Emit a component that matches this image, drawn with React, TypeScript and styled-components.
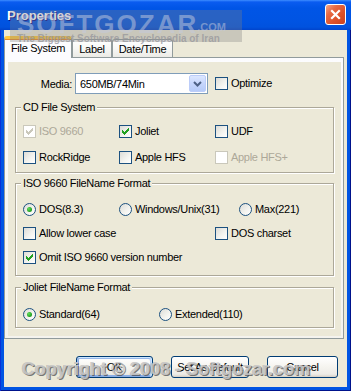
import React from 'react';
import styled, { createGlobalStyle } from 'styled-components';

const GlobalStyle = createGlobalStyle`
  html, body {
    margin: 0;
    padding: 0;
    background: #fff;
  }
  body {
    width: 351px;
    height: 391px;
    overflow: hidden;
  }
`;

const Window = styled.div`
  position: relative;
  width: 351px;
  height: 391px;
  display: flex;
  flex-direction: column;
  background: #0054e3;
  box-shadow: inset 1px 0 #0831d9, inset -1px -1px #00138c;
  font-family: "Liberation Sans", Arial, sans-serif;
  font-size: 11px;
  letter-spacing: -0.3px;
  color: #000;
  overflow: hidden;
`;

const TitleBar = styled.div`
  flex: none;
  height: 30px;
  box-sizing: border-box;
  display: flex;
  align-items: center;
  justify-content: space-between;
  padding: 0 5px 0 7px;
  background: linear-gradient(180deg, #3d8dff 0, #0a5cf0 2px, #0055e6 8px, #0054e3 20px, #0052de 27px, #0044cc 30px);
`;

const Title = styled.div`
  color: #fff;
  font-size: 13px;
  font-weight: bold;
  letter-spacing: 0;
  text-shadow: 1px 1px #0f1089;
`;

const CloseButton = styled.div`
  box-sizing: border-box;
  width: 21px;
  height: 21px;
  margin-top: -1px;
  border: 1px solid #fff;
  border-radius: 3px;
  background: linear-gradient(135deg, #f6a88a 0%, #e76a44 30%, #dc5028 65%, #c9421d 100%);
  display: flex;
  align-items: center;
  justify-content: center;
`;

const Body = styled.div`
  flex: 1;
  margin: 0 4px 4px 4px;
  background: #ece9d8;
  display: flex;
  flex-direction: column;
  padding: 6px 3px 9px 0;
`;

const TabStrip = styled.div`
  display: flex;
  align-items: flex-end;
  height: 22px;
  margin-bottom: -1px;
  position: relative;
  z-index: 1;
`;

const Tab = styled.div<{ $active?: boolean; $w: number }>`
  box-sizing: border-box;
  width: ${p => p.$w}px;
  height: ${p => (p.$active ? 22 : 18)}px;
  margin-bottom: ${p => (p.$active ? 0 : 1)}px;
  border: 1px solid #919b9c;
  border-bottom: none;
  border-top: ${p => (p.$active ? '3px solid #ffc73c' : '1px solid #919b9c')};
  border-radius: 3px 3px 0 0;
  background: ${p => (p.$active ? '#fcfcfe' : 'linear-gradient(180deg, #fff 0%, #f7f7f5 50%, #ecebe6 100%)')};
  display: flex;
  align-items: center;
  justify-content: center;
  padding-bottom: ${p => (p.$active ? 1 : 0)}px;
  box-shadow: ${p => (p.$active ? 'inset 0 1px #e68b2c' : 'none')};
`;

const Panel = styled.div`
  box-sizing: border-box;
  height: 282px;
  border: 1px solid #919b9c;
  background: linear-gradient(180deg, #fcfcfe, #f4f3ee);
  padding: 4px 2px 2px 3px;
  display: flex;
`;

const Page = styled.div`
  flex: 1;
  background: #ece9d8;
  padding: 11px 7px 0 7px;
  display: flex;
  flex-direction: column;
`;

const MediaRow = styled.div`
  display: flex;
  align-items: center;
  height: 21px;
`;

const MediaLabel = styled.span`
  width: 60px;
  box-sizing: border-box;
  padding-right: 3px;
  text-align: right;
`;

const Combo = styled.div`
  box-sizing: border-box;
  width: 133px;
  height: 21px;
  border: 1px solid #7f9db9;
  background: #fff;
  display: flex;
  align-items: center;
  padding: 1px;
  margin-right: 7px;
`;

const ComboText = styled.span`
  flex: 1;
  padding-left: 3px;
`;

const ComboButton = styled.span`
  box-sizing: border-box;
  width: 17px;
  height: 17px;
  border: 1px solid #bccdf9;
  border-radius: 2px;
  background: linear-gradient(180deg, #dce7ff 0%, #c6d6fc 50%, #b6cbf8 100%);
  display: flex;
  align-items: center;
  justify-content: center;
`;

const Group = styled.div<{ $mt: number; $pb: number }>`
  margin-top: ${p => p.$mt}px;
  border: 1px solid #aca899;
  box-shadow: 1px 1px 0 #fff, inset 1px 1px 0 #fff;
  padding: 0 7px ${p => p.$pb}px 7px;
  display: flex;
  flex-direction: column;
`;

const GroupTitle = styled.span`
  align-self: flex-start;
  margin: -7px 0 0 -2px;
  padding: 0 2px;
  line-height: 13px;
  background: #ece9d8;
`;

const Rows = styled.div<{ $mt: number; $gap: number }>`
  margin-top: ${p => p.$mt}px;
  display: flex;
  flex-direction: column;
  gap: ${p => p.$gap}px;
`;

const Row = styled.div`
  display: flex;
  height: 13px;
`;

const Cell = styled.label<{ $w?: number; $disabled?: boolean }>`
  display: flex;
  align-items: center;
  gap: 3px;
  width: ${p => (p.$w ? `${p.$w}px` : 'auto')};
  line-height: 13px;
  white-space: nowrap;
  color: ${p => (p.$disabled ? '#aca899' : '#000')};
`;

const Box = styled.span<{ $disabled?: boolean }>`
  box-sizing: border-box;
  flex: none;
  width: 13px;
  height: 13px;
  border: 1px solid ${p => (p.$disabled ? '#cac8bb' : '#1c5180')};
  background: ${p => (p.$disabled ? '#fff' : 'linear-gradient(135deg, #dcdcd7 0%, #f4f4f0 60%, #fff 100%)')};
  display: flex;
`;

const RadioRing = styled.span`
  box-sizing: border-box;
  flex: none;
  width: 13px;
  height: 13px;
  border-radius: 50%;
  border: 1px solid #1c5180;
  background: linear-gradient(135deg, #dcdcd7 0%, #f4f4f0 60%, #fff 100%);
  display: flex;
  align-items: center;
  justify-content: center;
`;

const RadioDot = styled.span`
  width: 5px;
  height: 5px;
  border-radius: 50%;
  background: radial-gradient(circle at 35% 35%, #62de5e 0%, #21a121 65%, #1a8a1a 100%);
`;

const ButtonRow = styled.div`
  margin-top: 17px;
  display: flex;
  justify-content: flex-end;
  gap: 18px;
  padding-right: 6px;
`;

const Button = styled.div<{ $w: number; $default?: boolean }>`
  box-sizing: border-box;
  width: ${p => p.$w}px;
  height: 22px;
  border: 1px solid #003c74;
  border-radius: 3px;
  background: linear-gradient(180deg, #fff 0%, #f5f4ef 50%, #ecebe6 86%, #d6d0c5 100%);
  display: flex;
  align-items: center;
  justify-content: center;
  box-shadow: ${p =>
    p.$default
      ? 'inset -1px 1px #cee7ff, inset 1px 2px #98b8ea, inset -2px 2px #bcd4f6, inset 1px -1px #89ade4, inset 2px -2px #89ade4'
      : 'none'};
`;

const TopMark = styled.div`
  position: absolute;
  left: 10px;
  top: 10px;
  width: 232px;
  height: 32px;
  box-sizing: border-box;
  padding-left: 7px;
  background: rgba(128, 128, 128, 0.32);
  pointer-events: none;
  display: flex;
  flex-direction: column;
  align-items: flex-start;
  z-index: 5;
`;

const MarkBrand = styled.div`
  margin-top: 3px;
  font-size: 26px;
  line-height: 22px;
  font-weight: bold;
  letter-spacing: 2px;
  color: rgba(196, 202, 222, 0.5);
`;

const MarkCom = styled.span`
  font-size: 11px;
  letter-spacing: 0;
  margin-left: -1px;
  vertical-align: 2px;
`;

const MarkSub = styled.div`
  margin-top: -4px;
  font-size: 10px;
  line-height: 10px;
  font-weight: bold;
  letter-spacing: 0;
  color: rgba(150, 150, 155, 0.75);
`;

const CopyMark = styled.div`
  position: absolute;
  left: 22px;
  top: 359px;
  font-size: 18px;
  font-weight: bold;
  letter-spacing: 0;
  white-space: nowrap;
  color: rgba(205, 205, 205, 0.85);
  text-shadow: 1px 1px 0 rgba(80, 80, 80, 0.75), -1px 0 0 rgba(120, 120, 120, 0.35);
  pointer-events: none;
  z-index: 5;
`;

const Check = ({ disabled }: { disabled?: boolean }) => (
  <svg width="11" height="11" viewBox="0 0 11 11" shapeRendering="crispEdges">
    <path d="M2 4 L4 6 L9 1 L9 4 L4 9 L2 7 Z" fill={disabled ? '#cac8bb' : '#21a121'} />
  </svg>
);

const CheckBox = ({
  label,
  checked,
  disabled,
  w,
}: {
  label: string;
  checked?: boolean;
  disabled?: boolean;
  w?: number;
}) => (
  <Cell $w={w} $disabled={disabled}>
    <Box $disabled={disabled}>{checked && <Check disabled={disabled} />}</Box>
    {label}
  </Cell>
);

const Radio = ({ label, checked, w }: { label: string; checked?: boolean; w?: number }) => (
  <Cell $w={w}>
    <RadioRing>{checked && <RadioDot />}</RadioRing>
    {label}
  </Cell>
);

export default function App() {
  return (
    <>
      <GlobalStyle />
      <Window>
        <TitleBar>
          <Title>Properties</Title>
          <CloseButton>
            <svg width="13" height="13" viewBox="0 0 13 13">
              <path d="M3 3 L10 10 M10 3 L3 10" stroke="#fff" strokeWidth="2.2" strokeLinecap="square" />
            </svg>
          </CloseButton>
        </TitleBar>

        <Body>
          <TabStrip>
            <Tab $active $w={68}>File System</Tab>
            <Tab $w={40}>Label</Tab>
            <Tab $w={61}>Date/Time</Tab>
          </TabStrip>

          <Panel>
            <Page>
              <MediaRow>
                <MediaLabel>Media:</MediaLabel>
                <Combo>
                  <ComboText>650MB/74Min</ComboText>
                  <ComboButton>
                    <svg width="9" height="6" viewBox="0 0 9 6">
                      <path d="M1 1 L4.5 4.5 L8 1" fill="none" stroke="#4d6185" strokeWidth="2" />
                    </svg>
                  </ComboButton>
                </Combo>
                <CheckBox label="Optimize" />
              </MediaRow>

              <Group $mt={13} $pb={8}>
                <GroupTitle>CD File System</GroupTitle>
                <Rows $mt={11} $gap={13}>
                  <Row>
                    <CheckBox label="ISO 9660" checked disabled w={96} />
                    <CheckBox label="Joliet" checked w={96} />
                    <CheckBox label="UDF" />
                  </Row>
                  <Row>
                    <CheckBox label="RockRidge" w={96} />
                    <CheckBox label="Apple HFS" w={96} />
                    <CheckBox label="Apple HFS+" disabled />
                  </Row>
                </Rows>
              </Group>

              <Group $mt={10} $pb={11}>
                <GroupTitle>ISO 9660 FileName Format</GroupTitle>
                <Rows $mt={13} $gap={11}>
                  <Row>
                    <Radio label="DOS(8.3)" checked w={96} />
                    <Radio label="Windows/Unix(31)" w={120} />
                    <Radio label="Max(221)" />
                  </Row>
                  <Row>
                    <CheckBox label="Allow lower case" w={192} />
                    <CheckBox label="DOS charset" />
                  </Row>
                  <Row>
                    <CheckBox label="Omit ISO 9660 version number" checked />
                  </Row>
                </Rows>
              </Group>

              <Group $mt={11} $pb={6}>
                <GroupTitle>Joliet FileName Format</GroupTitle>
                <Rows $mt={14} $gap={0}>
                  <Row>
                    <Radio label="Standard(64)" checked w={136} />
                    <Radio label="Extended(110)" />
                  </Row>
                </Rows>
              </Group>
            </Page>
          </Panel>

          <ButtonRow>
            <Button $w={77} $default>OK</Button>
            <Button $w={78}>Set As Default</Button>
            <Button $w={71}>Cancel</Button>
          </ButtonRow>
        </Body>

        <TopMark>
          <MarkBrand>
            SOFTGOZAR<MarkCom>.COM</MarkCom>
          </MarkBrand>
          <MarkSub>The Biggest Software Encyclopedia of Iran</MarkSub>
        </TopMark>
        <CopyMark>Copyright © 2008 - Softgozar.com</CopyMark>
      </Window>
    </>
  );
}
